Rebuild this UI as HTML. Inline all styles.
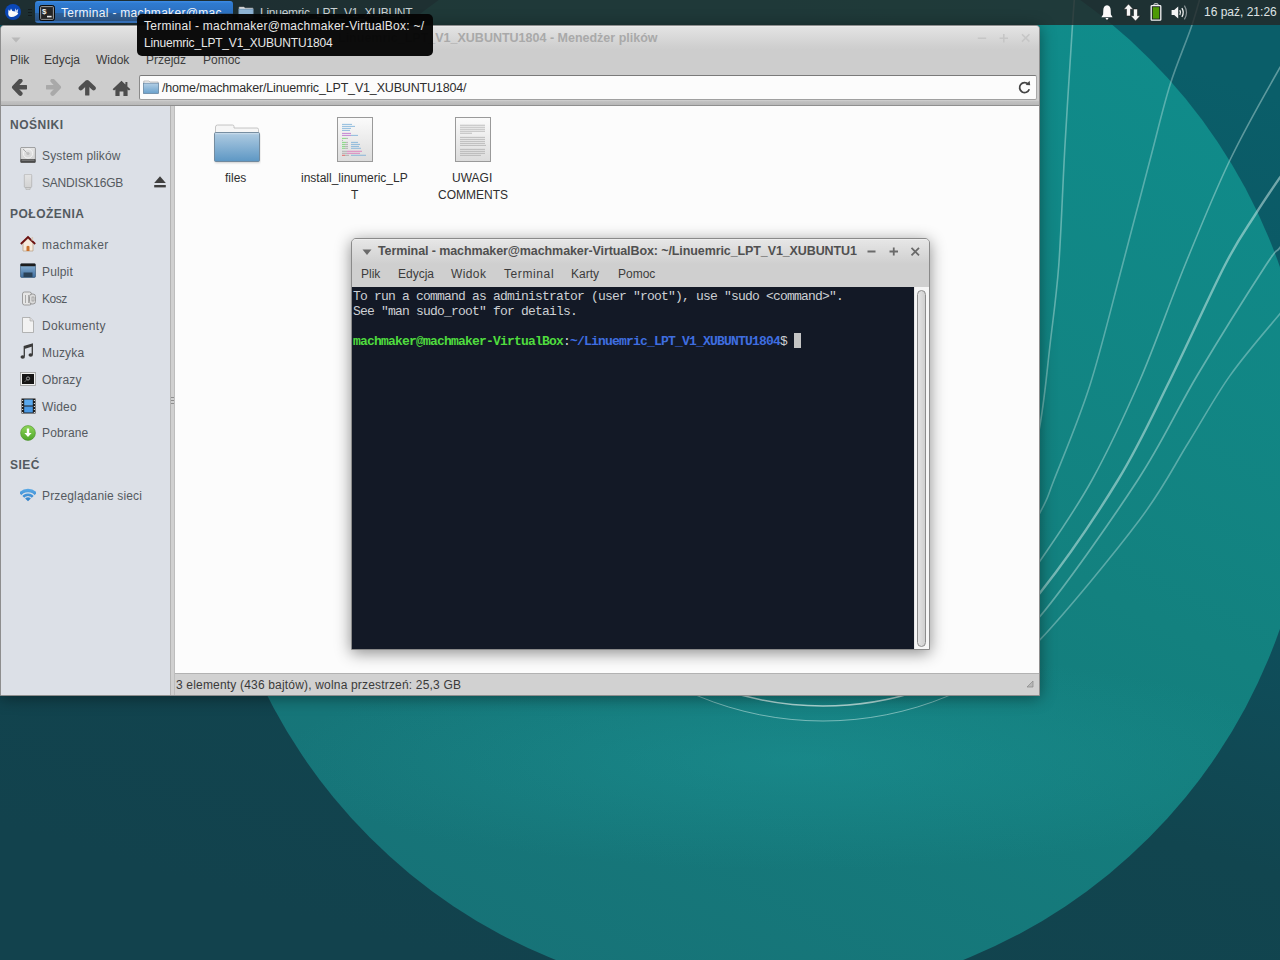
<!DOCTYPE html>
<html><head><meta charset="utf-8">
<style>
*{margin:0;padding:0;box-sizing:border-box}
html,body{width:1280px;height:960px;overflow:hidden;background:#12434f;font-family:"Liberation Sans",sans-serif}
.abs{position:absolute}
#wall{position:absolute;left:0;top:0;width:1280px;height:960px}
#panel{position:absolute;left:0;top:0;width:1280px;height:25px;background:rgba(35,37,38,0.8)}
.t{position:absolute;white-space:nowrap;line-height:1}
.fmmenu{font-size:12px;color:#3c3c3c}
.tmenu{font-size:12px;color:#3c3c3c}
.shead{font-size:12px;font-weight:bold;color:#535a60;letter-spacing:0.5px}
.sitem{font-size:12px;color:#555a60;letter-spacing:0.15px}
.fname{font-size:12px;color:#2e2e2e}
.tipt{font-size:12px;color:#e8e8e8}
pre{margin:0}
pre b{font-weight:bold}
</style></head>
<body>
<svg id="wall" width="1280" height="960" viewBox="0 0 1280 960">
  <defs>
    <linearGradient id="gOut" x1="0.75" y1="0" x2="0.35" y2="1">
      <stop offset="0" stop-color="#0a5e69"/>
      <stop offset="0.4" stop-color="#0e5260"/>
      <stop offset="0.7" stop-color="#11454f"/>
      <stop offset="1" stop-color="#12424d"/>
    </linearGradient>
    <radialGradient id="glow" cx="0.5" cy="0.5" r="0.5">
      <stop offset="0" stop-color="#1fa0a2" stop-opacity="0.35"/>
      <stop offset="1" stop-color="#1fa0a2" stop-opacity="0"/>
    </radialGradient>
    <linearGradient id="gIn" x1="0.8" y1="0" x2="0.3" y2="1">
      <stop offset="0" stop-color="#0f8e8d"/>
      <stop offset="0.5" stop-color="#13817f"/>
      <stop offset="1" stop-color="#177277"/>
    </linearGradient>
  </defs>
  <rect x="0" y="0" width="1280" height="960" fill="url(#gOut)"/>
  <circle cx="759.5" cy="448" r="551" fill="url(#gIn)"/>
  <clipPath id="cc"><circle cx="759.5" cy="448" r="551"/></clipPath>
  <ellipse cx="800" cy="760" rx="520" ry="110" fill="url(#glow)" clip-path="url(#cc)"/>
  <clipPath id="arcclip"><rect x="600" y="690" width="440" height="70"/></clipPath><g clip-path="url(#arcclip)"><circle cx="823" cy="393" r="313" fill="none" stroke="#e0f4f0" stroke-opacity="0.75" stroke-width="1.6"/><circle cx="823" cy="396" r="325" fill="none" stroke="#d9f2ee" stroke-opacity="0.5" stroke-width="1"/></g>
  <path d="M1076.0 -20.0 C1075.4 -12.5 1074.3 -2.5 1072.5 25.0 C1070.7 52.5 1067.3 105.0 1065.0 145.0 C1062.7 185.0 1061.2 231.7 1058.8 265.0 C1056.2 298.3 1053.1 318.3 1050.0 345.0 C1046.9 371.7 1045.0 395.8 1040.0 425.0 C1035.0 454.2 1023.3 504.2 1020.0 520.0" fill="none" stroke="#d9f2ee" stroke-opacity="0.40" stroke-width="1.60"/>
  <path d="M1205.0 -20.0 C1202.8 -12.5 1197.8 7.5 1192.0 25.0 C1186.2 42.5 1177.0 62.5 1170.0 85.0 C1163.0 107.5 1157.9 130.0 1150.0 160.0 C1142.1 190.0 1132.5 227.5 1122.5 265.0 C1112.5 302.5 1101.4 349.2 1090.0 385.0 C1078.6 420.8 1062.3 458.8 1054.0 480.0 C1045.7 501.2 1049.3 495.3 1040.3 512.0 C1031.3 528.7 1006.7 568.7 1000.0 580.0" fill="none" stroke="#d9f2ee" stroke-opacity="0.36" stroke-width="1.60"/>
  <path d="M1310.0 20.0 C1305.0 27.9 1293.3 44.2 1280.0 67.5 C1266.7 90.8 1245.8 127.1 1230.0 160.0 C1214.2 192.9 1200.0 228.3 1185.0 265.0 C1170.0 301.7 1155.5 344.2 1140.0 380.0 C1124.5 415.8 1108.6 449.9 1092.0 480.0 C1075.4 510.1 1057.3 535.6 1040.3 560.6 C1023.3 585.6 998.4 618.4 990.0 630.0" fill="none" stroke="#d9f2ee" stroke-opacity="0.40" stroke-width="1.60"/>
  <path d="M1310.0 135.0 C1305.0 142.1 1289.2 164.2 1280.0 177.5 C1270.8 190.8 1264.2 200.4 1255.0 215.0 C1245.8 229.6 1239.2 237.5 1225.0 265.0 C1210.8 292.5 1187.8 344.2 1170.0 380.0 C1152.2 415.8 1139.6 444.6 1118.0 480.0 C1096.4 515.4 1066.6 559.2 1040.3 592.5 C1014.0 625.8 973.4 665.4 960.0 680.0" fill="none" stroke="#d9f2ee" stroke-opacity="0.50" stroke-width="2.40"/>
  <path d="M1300.0 220.0 C1296.7 224.6 1285.7 240.0 1280.0 247.5 C1274.3 255.0 1279.8 243.8 1266.0 265.0 C1252.2 286.2 1218.9 339.2 1197.5 375.0 C1176.1 410.8 1164.0 439.8 1137.8 480.0 C1111.6 520.2 1066.6 584.3 1040.3 616.0 C1014.0 647.7 990.0 661.0 980.0 670.0" fill="none" stroke="#d9f2ee" stroke-opacity="0.40" stroke-width="1.76"/>
  <path d="M1320.0 268.0 C1313.3 275.6 1295.0 295.8 1280.0 313.8 C1265.0 331.7 1245.2 354.2 1230.0 375.6 C1214.8 397.0 1203.8 417.9 1188.8 442.0 C1173.7 466.1 1164.2 487.1 1139.5 520.0 C1114.8 552.9 1066.9 611.1 1040.3 639.4 C1013.7 667.7 990.0 681.6 980.0 690.0" fill="none" stroke="#d9f2ee" stroke-opacity="0.36" stroke-width="1.60"/>
</svg>
<div id="panel">
  <!-- xubuntu logo -->
  <svg class="abs" style="left:4px;top:3px" width="18" height="18" viewBox="0 0 18 18">
    <circle cx="9" cy="9" r="8" fill="#0b48b8"/>
    <path d="M4.2 10.6 C4.1 8.7 5.9 7.9 8 8.1 C10.5 8.3 12.7 8.9 14.3 10.3 C13.3 12.4 10.6 13.8 7.6 14.1 C5.4 14.3 4.3 13 4.2 10.6Z" fill="#fff"/>
    <path d="M4.3 9.4 L4.5 6.5 L6 8 L7 5.5 L8.6 8.6Z" fill="#fff"/>
    <path d="M10.6 9 L11.4 5.2 L12.5 7.6 L14.2 5.8 L13.8 9.6Z" fill="#e8eefa" opacity="0.85"/>
  </svg>
  <div class="abs" style="left:28px;top:9px;width:4px;height:1.2px;background:#141c1e"></div>
  <div class="abs" style="left:28px;top:12px;width:4px;height:1.2px;background:#141c1e"></div>
  <div class="abs" style="left:28px;top:15px;width:4px;height:1.2px;background:#141c1e"></div>
  <!-- active task -->
  <div class="abs" style="left:35px;top:1px;width:198px;height:22px;border-radius:3px;background:linear-gradient(#3a88e2 0,#3a88e2 1px,#2f7bd0 2px,#2c71c2 11.5px,#2e6099 12.5px,#2f5a8c 20px,#3b7ccc 20.5px,#3b7ccc 22px)">
  </div>
  <svg class="abs" style="left:39px;top:5px" width="16" height="16" viewBox="0 0 16 16">
    <rect x="0.5" y="0.5" width="15" height="15" rx="2" fill="#1a1a1a" stroke="#0a0a0a" stroke-width="1"/>
    <rect x="1.6" y="1.6" width="12.8" height="12.8" rx="0.8" fill="#262626" stroke="#9c9c9c" stroke-width="1"/>
    <text x="3" y="9.4" font-family="Liberation Sans" font-weight="bold" font-size="8" fill="#f4f4f4">$</text>
    <rect x="8" y="10.8" width="4.6" height="1.6" fill="#f4f4f4"/>
  </svg>
  <div class="abs" style="left:61px;top:0;width:172px;height:24px;overflow:hidden"><div class="t abs" id="task1" style="left:0;top:6.8px;font-size:12px;letter-spacing:0.3px;color:#f2f6fa">Terminal - machmaker@mac...</div></div>
  <!-- task 2 -->
  <svg class="abs" style="left:238px;top:4px" width="16" height="16" viewBox="0 0 16 16">
    <path d="M1 3 h5 l1 1 h8 v10 h-14z" fill="#f0f0f0" stroke="#888" stroke-width="0.6"/>
    <rect x="0.8" y="5" width="14.4" height="9.4" fill="#8fb5d6" stroke="#5f7d95" stroke-width="0.6"/>
  </svg>
  <div class="t abs" id="task2" style="left:260px;top:6.8px;font-size:12px;letter-spacing:-0.25px;color:#c9d0d2">Linuemric_LPT_V1_XUBUNT</div>
  <!-- tray -->
  <svg class="abs" style="left:1100px;top:4px" width="14" height="17" viewBox="0 0 14 17">
    <path d="M7 1.2 C9.6 1.2 10.6 3.4 10.7 6 L10.9 10.6 L12.6 13.2 H1.4 L3.1 10.6 L3.3 6 C3.4 3.4 4.4 1.2 7 1.2Z" fill="#fafafa"/>
    <path d="M5.6 14.1 H8.4 C8.2 15.3 7.7 15.8 7 15.8 C6.3 15.8 5.8 15.3 5.6 14.1Z" fill="#fafafa"/>
  </svg>
  <svg class="abs" style="left:1122px;top:3px" width="20" height="19" viewBox="0 0 20 19">
    <path d="M6.5 1 L11.3 6.2 H8.5 V13 H4.5 V6.2 H1.7Z" fill="#f6f6f6" stroke="#111" stroke-width="0.5"/>
    <path d="M13.5 18 L18.3 12.8 H15.5 V6 H11.5 V12.8 H8.7Z" fill="#f6f6f6" stroke="#111" stroke-width="0.5"/>
  </svg>
  <svg class="abs" style="left:1150px;top:3px" width="12" height="18" viewBox="0 0 12 18">
    <rect x="4" y="0.8" width="4" height="2" rx="0.6" fill="none" stroke="#f4f4f4" stroke-width="1"/>
    <rect x="1.2" y="2.6" width="9.6" height="14.6" rx="0.8" fill="#1c2426" stroke="#f4f4f4" stroke-width="1.3"/>
    <rect x="2.8" y="4.2" width="6.4" height="11.4" fill="#4e9a06"/>
  </svg>
  <svg class="abs" style="left:1171px;top:4px" width="18" height="17" viewBox="0 0 18 17">
    <path d="M0.6 6 H3.2 L7.2 2.6 V14.4 L3.2 11 H0.6Z" fill="#f4f4f4"/>
    <path d="M8.8 6.2 Q10.2 8.5 8.8 10.8" stroke="#f4f4f4" stroke-width="1.3" fill="none"/>
    <path d="M10.9 4.2 Q13.6 8.5 10.9 12.8" stroke="#f4f4f4" stroke-width="1.3" fill="none"/>
    <path d="M13.4 1.6 Q17.6 8.5 13.4 15.4" stroke="#8a9396" stroke-width="1.2" fill="none"/>
  </svg>
  <div class="t abs" id="clock" style="left:1204px;top:5.6px;font-size:12px;color:#dfe3e4">16 paź, 21:26</div>
</div>
<div id="fm" class="abs" style="left:0;top:25px;width:1040px;height:671px;background:#cdcdcd;border:1px solid #8e8e8e;border-radius:4px 4px 0 0;box-shadow:0 2px 16px rgba(0,0,0,0.42);overflow:hidden">
  <div class="abs" style="left:0;top:0;width:1038px;height:24px;background:linear-gradient(#f2f2f2 0,#e3e3e3 1px,#d0d0d0 20px,#cdcdcd 24px)"></div>
  <!-- title -->
  <svg class="abs" style="left:10px;top:11px" width="10" height="6" viewBox="0 0 10 6"><path d="M0.5 0.5 H9.5 L5 5.5Z" fill="#b9b9b9"/></svg>
  <div class="t abs" id="fmtitle" style="left:337px;top:6.4px;font-size:12.5px;font-weight:bold;color:#a9a9a9">Linuemric_LPT_V1_XUBUNTU1804 - Menedżer plików</div>
  <svg class="abs" style="left:975px;top:6px" width="60" height="12" viewBox="0 0 60 12">
    <path d="M1.8 6.2 H10.2" stroke="#c6c6c6" stroke-width="1.6"/>
    <path d="M23.6 6.2 H32 M27.8 2 V10.4" stroke="#c6c6c6" stroke-width="1.6"/>
    <path d="M46 2.2 L53.4 9.6 M53.4 2.2 L46 9.6" stroke="#c6c6c6" stroke-width="1.6"/>
  </svg>
  <!-- menu -->
  <div class="t abs fmmenu" style="left:9px;top:28px">Plik</div>
  <div class="t abs fmmenu" style="left:43px;top:28px">Edycja</div>
  <div class="t abs fmmenu" style="left:95px;top:28px">Widok</div>
  <div class="t abs fmmenu" style="left:145px;top:28px">Przejdz</div>
  <div class="t abs fmmenu" style="left:202px;top:28px">Pomoc</div>
  <!-- toolbar icons -->
  <svg class="abs" style="left:10px;top:53px" width="18" height="18" viewBox="0 0 18 18">
    <path d="M9.4 1.8 L3.2 8.2 L9.4 14.6" fill="none" stroke="#4f4f4f" stroke-width="4.4" stroke-linejoin="round" stroke-linecap="round"/>
    <rect x="3.5" y="6.1" width="12.5" height="4.3" rx="0.6" fill="#4f4f4f"/>
  </svg>
  <svg class="abs" style="left:43px;top:53px" width="18" height="18" viewBox="0 0 18 18">
    <path d="M8.6 1.8 L14.8 8.2 L8.6 14.6" fill="none" stroke="#a9a9a9" stroke-width="4.4" stroke-linejoin="round" stroke-linecap="round"/>
    <rect x="2" y="6.1" width="12.5" height="4.3" rx="0.6" fill="#a9a9a9"/>
  </svg>
  <svg class="abs" style="left:77px;top:53px" width="18" height="18" viewBox="0 0 18 18">
    <path d="M2.8 9.2 L9.2 3.2 L15.6 9.2" fill="none" stroke="#4f4f4f" stroke-width="4.4" stroke-linejoin="round" stroke-linecap="round"/>
    <rect x="7.1" y="4" width="4.3" height="12.6" rx="0.6" fill="#4f4f4f"/>
  </svg>
  <svg class="abs" style="left:111px;top:53px" width="19" height="18" viewBox="0 0 19 18">
    <path d="M9.5 1.8 L0.6 10.2 L2 11.6 L3.4 10.4 V17 H7.6 V12.4 H11.4 V17 H15.6 V10.4 L17 11.6 L18.4 10.2 L15.4 7.4 V3 H13.4 V5.6Z" fill="#4d4d4d"/>
  </svg>
  <!-- location bar -->
  <div class="abs" style="left:138px;top:49px;width:898px;height:25px;background:#fcfcfc;border:1px solid #7d7d7d;border-color:#7a7a7a #a9a9a9 #a0a0a0 #8a8a8a;border-radius:2px"></div>
  <svg class="abs" style="left:142px;top:54px" width="16" height="14" viewBox="0 0 16 14">
    <path d="M0.8 1 H6 L7 2 H15.2 V13 H0.8Z" fill="#f2f2f2" stroke="#9a9a9a" stroke-width="0.6"/>
    <defs><linearGradient id="fg1" x1="0" y1="0" x2="0" y2="1"><stop offset="0" stop-color="#b3cfe6"/><stop offset="1" stop-color="#6aa1cc"/></linearGradient></defs>
    <rect x="0.5" y="3.2" width="15" height="10.3" fill="url(#fg1)" stroke="#6384a0" stroke-width="0.7"/>
  </svg>
  <div class="t abs" id="path" style="left:161px;top:56px;font-size:12.5px;letter-spacing:-0.17px;color:#2e2e2e">/home/machmaker/Linuemric_LPT_V1_XUBUNTU1804/</div>
  <svg class="abs" style="left:1016px;top:54px" width="15" height="15" viewBox="0 0 15 15">
    <path d="M11.3 4.2 A5 5 0 1 0 12.3 9.3" stroke="#444" stroke-width="1.8" fill="none"/>
    <path d="M8.6 4.9 L13.2 5.3 L12.6 0.8Z" fill="#444"/>
  </svg>
  <!-- toolbar bottom -->
  <div class="abs" style="left:0;top:75px;width:1038px;height:5px;background:linear-gradient(#c3c3c3,#b5b5b5)"></div>
  <div class="abs" style="left:0;top:79px;width:1038px;height:1px;background:#8f8f8f"></div>
  <!-- sidebar -->
  <div class="abs" style="left:0;top:80px;width:169px;height:589px;background:#dce0e7"></div>
  <div class="abs" style="left:169px;top:80px;width:5px;height:589px;background:#d0d0d0;border-left:1px solid #b3b3b3;border-right:1px solid #bdbdbd"></div>
  <div class="abs" style="left:170px;top:371px;width:3px;height:1px;background:#8e8e8e"></div>
  <div class="abs" style="left:170px;top:374px;width:3px;height:1px;background:#8e8e8e"></div>
  <div class="abs" style="left:170px;top:377px;width:3px;height:1px;background:#8e8e8e"></div>
  <!-- content -->
  <div class="abs" style="left:174px;top:80px;width:864px;height:567px;background:#fcfcfc"></div>
  <!-- status -->
  <div class="abs" style="left:174px;top:647px;width:864px;height:22px;background:#d1d1d1;border-top:1px solid #b2b2b2"></div>
  <div class="t abs" id="status" style="left:175px;top:653px;font-size:12px;letter-spacing:0.18px;color:#3a3a3a">3 elementy (436 bajtów), wolna przestrzeń: 25,3 GB</div>
  <svg class="abs" style="left:1025px;top:654px" width="8" height="8" viewBox="0 0 8 8"><path d="M7 1 V7 H1Z" fill="#b8b8b8" stroke="#888" stroke-width="0.7"/></svg>
</div>
<!-- sidebar -->
<div class="t abs shead" style="left:10px;top:118.5px">NOŚNIKI</div>
<svg class="abs" style="left:20px;top:147px" width="16" height="16" viewBox="0 0 16 16">
  <defs><linearGradient id="hd" x1="0" y1="0" x2="0" y2="1"><stop offset="0" stop-color="#e6e6e6"/><stop offset="1" stop-color="#cfcfcf"/></linearGradient></defs>
  <rect x="0.6" y="0.4" width="14.8" height="15.2" rx="1.2" fill="url(#hd)" stroke="#7a7a7a" stroke-width="0.7"/>
  <circle cx="8" cy="6.5" r="4.6" fill="none" stroke="#f6f6f6" stroke-width="0.9"/>
  <circle cx="8" cy="6.5" r="1.6" fill="#bdbdbd"/>
  <path d="M3 2 L6.5 5.5" stroke="#9a9a9a" stroke-width="0.8"/>
  <rect x="0.4" y="12" width="15.2" height="3.8" rx="1" fill="#4a4a4a"/>
  <rect x="1.6" y="12.6" width="12.8" height="1" fill="#8d8d8d"/>
</svg>
<div class="t abs sitem" style="left:42px;top:149.8px">System plików</div>
<svg class="abs" style="left:20px;top:174px" width="16" height="16" viewBox="0 0 16 16">
  <defs><linearGradient id="usb" x1="0" y1="0" x2="0" y2="1"><stop offset="0" stop-color="#e4e4e4"/><stop offset="1" stop-color="#d2d2d2"/></linearGradient></defs>
  <rect x="4.3" y="0.3" width="7.4" height="13.2" rx="1" fill="url(#usb)" stroke="#a6a6a6" stroke-width="0.6"/>
  <path d="M5.6 13.5 H10.4 L10 15.6 H6Z" fill="#d4d4d4" stroke="#a6a6a6" stroke-width="0.5"/>
</svg>
<div class="t abs sitem" style="left:42px;top:176.5px;letter-spacing:-0.2px">SANDISK16GB</div>
<svg class="abs" style="left:153px;top:175px" width="14" height="14" viewBox="0 0 14 14">
  <path d="M7 1.2 L12.8 8 H1.2Z" fill="#3f3f3f"/>
  <rect x="1.2" y="10" width="11.6" height="2.4" fill="#3f3f3f"/>
</svg>
<div class="t abs shead" style="left:10px;top:207.8px">POŁOŻENIA</div>

<svg class="abs" style="left:20px;top:235px" width="16" height="17" viewBox="0 0 16 17">
  <path d="M3 8 V16 H13 V8 L8 3.5Z" fill="#f6eadc" stroke="#b09070" stroke-width="0.6"/>
  <path d="M6.5 16 V11.5 Q8 10 9.5 11.5 V16Z" fill="#c8702c"/>
  <path d="M0.8 9 L8 2 L15.2 9" fill="none" stroke="#6b1010" stroke-width="1.8"/>
  <rect x="11.5" y="2" width="1.6" height="3.5" fill="#d9c9b9"/>
</svg>
<div class="t abs sitem" style="left:42px;top:239.1px;letter-spacing:0.45px">machmaker</div>

<svg class="abs" style="left:20px;top:263px" width="16" height="15" viewBox="0 0 16 15">
  <defs><linearGradient id="pl" x1="0" y1="0" x2="0" y2="1"><stop offset="0" stop-color="#8fb6d8"/><stop offset="1" stop-color="#3c6b9c"/></linearGradient></defs>
  <rect x="0.5" y="1" width="15" height="13.5" rx="1.2" fill="url(#pl)" stroke="#2f5070" stroke-width="0.6"/>
  <rect x="0.5" y="0.6" width="15" height="2.6" rx="0.8" fill="#1c1c1c"/>
  <rect x="3.5" y="9.5" width="9" height="4.5" fill="#2a4258"/>
</svg>
<div class="t abs sitem" style="left:42px;top:265.8px">Pulpit</div>

<svg class="abs" style="left:21px;top:290px" width="16" height="16" viewBox="0 0 16 16">
  <rect x="1.5" y="2" width="9" height="13" rx="2" fill="#e6e6e6" stroke="#8a8a8a" stroke-width="0.8"/>
  <path d="M4.5 5 V13 M7.5 5 V13" stroke="#9a9a9a" stroke-width="0.8"/>
  <rect x="8.5" y="4" width="6" height="10" rx="2.5" fill="#dcdcdc" stroke="#8a8a8a" stroke-width="0.8"/>
  <rect x="11" y="7" width="2" height="4" fill="none" stroke="#8a8a8a" stroke-width="0.6"/>
</svg>
<div class="t abs sitem" style="left:42px;top:293.1px;letter-spacing:-0.45px">Kosz</div>

<svg class="abs" style="left:21px;top:317px" width="14" height="16" viewBox="0 0 14 16">
  <path d="M1.5 0.5 H9 L12.5 4 V15.5 H1.5Z" fill="#f2f2f2" stroke="#a5a5a5" stroke-width="0.8"/>
  <path d="M9 0.5 V4 H12.5" fill="#dcdcdc" stroke="#a5a5a5" stroke-width="0.6"/>
</svg>
<div class="t abs sitem" style="left:42px;top:319.8px;letter-spacing:0.35px">Dokumenty</div>

<svg class="abs" style="left:20px;top:343px" width="14" height="17" viewBox="0 0 14 17">
  <path d="M4.3 13.5 V3.6 L12.3 1.2 V11.8" fill="none" stroke="#3a3a3a" stroke-width="1.3"/>
  <path d="M4.3 3.6 L12.3 1.2 V3.6 L4.3 6Z" fill="#3a3a3a"/>
  <ellipse cx="2.7" cy="14" rx="2.2" ry="1.7" fill="#3a3a3a"/>
  <ellipse cx="10.7" cy="12" rx="2.2" ry="1.7" fill="#3a3a3a"/>
</svg>
<div class="t abs sitem" style="left:42px;top:346.5px">Muzyka</div>

<svg class="abs" style="left:20px;top:372px" width="16" height="14" viewBox="0 0 16 14">
  <rect x="0.5" y="0.5" width="15" height="13" fill="#f0f0f0" stroke="#9a9a9a" stroke-width="0.8"/>
  <rect x="2" y="2" width="12" height="10" fill="#151515"/>
  <circle cx="8" cy="6.5" r="1.6" fill="none" stroke="#cfcfcf" stroke-width="0.7"/>
  <path d="M4.5 10 L7 7.5" stroke="#9a9a9a" stroke-width="0.6"/>
</svg>
<div class="t abs sitem" style="left:42px;top:373.8px">Obrazy</div>

<svg class="abs" style="left:21px;top:398px" width="15" height="16" viewBox="0 0 15 16">
  <rect x="0.5" y="0.5" width="14" height="15" fill="#1e1e1e"/>
  <rect x="3.2" y="1.5" width="8.6" height="6" fill="#5aaaf0"/>
  <rect x="3.2" y="8.5" width="8.6" height="6" fill="#4a9ae6"/>
  <g fill="#d8d8d8"><rect x="1" y="2" width="1.2" height="1"/><rect x="1" y="5" width="1.2" height="1"/><rect x="1" y="8" width="1.2" height="1"/><rect x="1" y="11" width="1.2" height="1"/><rect x="1" y="14" width="1.2" height="1"/>
  <rect x="12.8" y="2" width="1.2" height="1"/><rect x="12.8" y="5" width="1.2" height="1"/><rect x="12.8" y="8" width="1.2" height="1"/><rect x="12.8" y="11" width="1.2" height="1"/><rect x="12.8" y="14" width="1.2" height="1"/></g>
</svg>
<div class="t abs sitem" style="left:42px;top:400.5px">Wideo</div>

<svg class="abs" style="left:20px;top:425px" width="16" height="16" viewBox="0 0 16 16">
  <defs><linearGradient id="dl" x1="0" y1="0" x2="0" y2="1"><stop offset="0" stop-color="#8fd65a"/><stop offset="1" stop-color="#4ea62a"/></linearGradient></defs>
  <circle cx="8" cy="8" r="7.4" fill="url(#dl)" stroke="#4a8f2a" stroke-width="0.6"/>
  <path d="M6.8 3.5 H9.2 V8 H11.6 L8 12 L4.4 8 H6.8Z" fill="#fff"/>
</svg>
<div class="t abs sitem" style="left:42px;top:427.1px">Pobrane</div>

<div class="t abs shead" style="left:10px;top:458.8px">SIEĆ</div>
<svg class="abs" style="left:20px;top:488px" width="16" height="14" viewBox="0 0 16 14">
  <defs><linearGradient id="wf" x1="0" y1="0" x2="0" y2="1"><stop offset="0" stop-color="#5aa9e6"/><stop offset="1" stop-color="#2f7fc8"/></linearGradient></defs>
  <path d="M8.00 13.20 L-1.07 4.74 A12.40 12.40 0 0 1 17.07 4.74 Z" fill="url(#wf)"/><path d="M4.02 10.90 A4.60 4.60 0 0 1 11.98 10.90" fill="none" stroke="#dce0e7" stroke-width="1.2"/><path d="M0.73 9.00 A8.40 8.40 0 0 1 15.27 9.00" fill="none" stroke="#dce0e7" stroke-width="1.2"/>
</svg>
<div class="t abs sitem" style="left:42px;top:489.5px">Przeglądanie sieci</div>
<!-- files in content area -->
<svg class="abs" style="left:213px;top:123px" width="48" height="42" viewBox="0 0 48 42">
  <defs>
    <linearGradient id="fold" x1="0" y1="0" x2="0" y2="1"><stop offset="0" stop-color="#b0cce2"/><stop offset="1" stop-color="#5d97c4"/></linearGradient>
    <filter id="fsh" x="-10%" y="-10%" width="120%" height="130%"><feGaussianBlur stdDeviation="0.8"/></filter>
  </defs>
  <rect x="2" y="11" width="45" height="29" rx="1" fill="#000" opacity="0.18" filter="url(#fsh)"/>
  <path d="M2.5 4 Q2.5 2 4.5 2 H19.5 Q21 2 21 3.5 V5 H44 Q45.5 5 45.5 6.5 V12 H2.5Z" fill="#f6f6f6" stroke="#b8b8b8" stroke-width="0.8"/>
  <rect x="1.5" y="9.5" width="45" height="29" rx="1.2" fill="url(#fold)" stroke="#6c8498" stroke-width="0.9"/>
  <rect x="2.2" y="10.2" width="43.6" height="1" fill="#d8e6f1" opacity="0.7"/>
</svg>
<div class="t abs fname" style="left:225px;top:172px">files</div>

<svg class="abs" style="left:336px;top:116px" width="38" height="47" viewBox="0 0 38 47">
  <defs><linearGradient id="doc" x1="0" y1="0" x2="0" y2="1"><stop offset="0" stop-color="#fbfbfb"/><stop offset="1" stop-color="#dcdcdc"/></linearGradient></defs>
  <rect x="1.5" y="1.5" width="35" height="44" fill="url(#doc)" stroke="#9a9a9a" stroke-width="1"/>
  <rect x="6" y="7.9" width="10" height="0.9" fill="#6aa6d6" opacity="0.8"/><rect x="6" y="9.9" width="13" height="0.9" fill="#6aa6d6" opacity="0.8"/><rect x="6" y="11.9" width="9" height="0.9" fill="#6aa6d6" opacity="0.8"/><rect x="6" y="13.9" width="8" height="0.9" fill="#6aa6d6" opacity="0.8"/><rect x="6" y="16.9" width="9" height="0.9" fill="#b25cc8" opacity="0.8"/><rect x="6" y="18.9" width="9" height="0.9" fill="#b25cc8" opacity="0.8"/><rect x="15" y="18.9" width="7" height="0.9" fill="#6aa6d6" opacity="0.8"/><rect x="6" y="21.9" width="4" height="0.9" fill="#5fd35a" opacity="0.8"/><rect x="10" y="21.9" width="2" height="0.9" fill="#9c9c9c" opacity="0.8"/><rect x="6" y="23.9" width="1" height="0.9" fill="#9c9c9c" opacity="0.8"/><rect x="6" y="25.9" width="4" height="0.9" fill="#5fd35a" opacity="0.8"/><rect x="10" y="25.9" width="2" height="0.9" fill="#9c9c9c" opacity="0.8"/><rect x="15" y="25.9" width="7" height="0.9" fill="#6aa6d6" opacity="0.8"/><rect x="6" y="27.9" width="3" height="0.9" fill="#5fd35a" opacity="0.8"/><rect x="9" y="27.9" width="3" height="0.9" fill="#9c9c9c" opacity="0.8"/><rect x="15" y="27.9" width="9" height="0.9" fill="#6aa6d6" opacity="0.8"/><rect x="6" y="29.9" width="3" height="0.9" fill="#5fd35a" opacity="0.8"/><rect x="9" y="29.9" width="3" height="0.9" fill="#9c9c9c" opacity="0.8"/><rect x="15" y="29.9" width="8" height="0.9" fill="#6aa6d6" opacity="0.8"/><rect x="6" y="31.8" width="3" height="0.9" fill="#5fd35a" opacity="0.8"/><rect x="9" y="31.8" width="3" height="0.9" fill="#9c9c9c" opacity="0.8"/><rect x="15" y="31.8" width="10" height="0.9" fill="#6aa6d6" opacity="0.8"/><rect x="6" y="34.8" width="5" height="0.9" fill="#9c9c9c" opacity="0.8"/><rect x="11" y="34.8" width="15" height="0.9" fill="#da5fae" opacity="0.8"/><rect x="6" y="36.8" width="5" height="0.9" fill="#9c9c9c" opacity="0.8"/><rect x="11" y="36.8" width="13" height="0.9" fill="#da5fae" opacity="0.8"/><rect x="6" y="38.8" width="3" height="0.9" fill="#e23a3a" opacity="0.8"/><rect x="9" y="38.8" width="4" height="0.9" fill="#9c9c9c" opacity="0.8"/><rect x="15" y="38.8" width="15" height="0.9" fill="#6aa6d6" opacity="0.8"/>
</svg>
<div class="t abs fname" style="left:301px;top:172px">install_linumeric_LP</div>
<div class="t abs fname" style="left:351px;top:189px">T</div>

<svg class="abs" style="left:454px;top:116px" width="38" height="47" viewBox="0 0 38 47">
  <rect x="1.5" y="1.5" width="35" height="44" fill="url(#doc)" stroke="#9a9a9a" stroke-width="1"/>
  <rect x="6" y="8.8" width="25" height="0.8" fill="#a6a6a6" opacity="0.85"/><rect x="6" y="10.8" width="25" height="0.8" fill="#a6a6a6" opacity="0.85"/><rect x="6" y="12.8" width="25" height="0.8" fill="#a6a6a6" opacity="0.85"/><rect x="6" y="14.8" width="25" height="0.8" fill="#a6a6a6" opacity="0.85"/><rect x="6" y="16.8" width="12" height="0.8" fill="#a6a6a6" opacity="0.85"/><rect x="6" y="20.9" width="25" height="0.8" fill="#a6a6a6" opacity="0.85"/><rect x="6" y="22.9" width="25" height="0.8" fill="#a6a6a6" opacity="0.85"/><rect x="6" y="24.9" width="25" height="0.8" fill="#a6a6a6" opacity="0.85"/><rect x="6" y="26.9" width="25" height="0.8" fill="#a6a6a6" opacity="0.85"/><rect x="6" y="28.9" width="26" height="0.8" fill="#a6a6a6" opacity="0.85"/><rect x="6" y="32.9" width="25" height="0.8" fill="#a6a6a6" opacity="0.85"/><rect x="6" y="34.9" width="25" height="0.8" fill="#a6a6a6" opacity="0.85"/><rect x="6" y="36.9" width="25" height="0.8" fill="#a6a6a6" opacity="0.85"/><rect x="6" y="38.9" width="21" height="0.8" fill="#a6a6a6" opacity="0.85"/>
</svg>
<div class="t abs fname" style="left:452px;top:172px">UWAGI</div>
<div class="t abs fname" style="left:438px;top:189px">COMMENTS</div>
<div id="term" class="abs" style="left:351px;top:238px;width:579px;height:412px;background:#cfcfcf;border:1px solid #8a8a8a;border-radius:5px 5px 0 0;box-shadow:0 3px 16px rgba(0,0,0,0.45);overflow:hidden">
  <div class="abs" style="left:0;top:0;width:577px;height:25px;background:linear-gradient(#f6f6f6 0,#e6e6e6 1px,#d2d2d2 22px,#cfcfcf 25px)"></div>
  <svg class="abs" style="left:10px;top:10px" width="10" height="7" viewBox="0 0 10 7"><path d="M0.5 0.5 H9.5 L5 6Z" fill="#6a6a6a"/></svg>
  <div class="t abs" id="termtitle" style="left:26px;top:6.4px;font-size:12.5px;letter-spacing:-0.1px;font-weight:bold;color:#505050">Terminal - machmaker@machmaker-VirtualBox: ~/Linuemric_LPT_V1_XUBUNTU1</div>
  <svg class="abs" style="left:514px;top:7px" width="60" height="12" viewBox="0 0 60 12">
    <path d="M1.5 5.5 H9.5" stroke="#6a6a6a" stroke-width="1.8"/>
    <path d="M23.5 5.5 H32 M27.75 1.5 V9.5" stroke="#6a6a6a" stroke-width="1.8"/>
    <path d="M45.5 1.8 L53 9.3 M53 1.8 L45.5 9.3" stroke="#6a6a6a" stroke-width="1.8"/>
  </svg>
  <div class="t abs tmenu" style="left:9px;top:29px">Plik</div>
  <div class="t abs tmenu" style="left:46px;top:29px">Edycja</div>
  <div class="t abs tmenu" style="left:99px;top:29px;letter-spacing:0.4px">Widok</div>
  <div class="t abs tmenu" style="left:152px;top:29px;letter-spacing:0.6px">Terminal</div>
  <div class="t abs tmenu" style="left:219px;top:29px">Karty</div>
  <div class="t abs tmenu" style="left:266px;top:29px">Pomoc</div>
  <!-- content -->
  <div class="abs" style="left:0;top:48px;width:562px;height:362px;background:#131926"></div>
  <div class="abs" style="left:562px;top:48px;width:15px;height:362px;background:#f6f6f6;border-left:1px solid #e6e6e6"></div>
  <div class="abs" style="left:565px;top:51px;width:9.2px;height:357px;border-radius:4.6px;background:linear-gradient(90deg,#e4e4e4,#cfcfcf);border:1px solid #8c8c8c"></div>
  <pre class="abs" id="tt" style="left:1px;top:50.3px;font-family:'Liberation Mono',monospace;font-size:13px;letter-spacing:-0.8px;line-height:15px;color:#cdd0d4">To run a command as administrator (user "root"), use "sudo &lt;command&gt;".
See "man sudo_root" for details.

<b style="color:#4fdc3e">machmaker@machmaker-VirtualBox</b>:<b style="color:#3f6ee0">~/Linuemric_LPT_V1_XUBUNTU1804</b>$ </pre>
  <div class="abs" style="left:442px;top:94px;width:7px;height:15px;background:#c4c4c4"></div>
</div>
<div id="tip" class="abs" style="left:137px;top:14px;width:296px;height:41.5px;border-radius:5px;background:rgba(5,5,5,0.97)">
  <div class="t abs tipt" style="left:7px;top:6.3px;letter-spacing:0.25px">Terminal - machmaker@machmaker-VirtualBox: ~/</div>
  <div class="t abs tipt" style="left:7px;top:23.2px;letter-spacing:-0.18px">Linuemric_LPT_V1_XUBUNTU1804</div>
</div>
</body></html>
